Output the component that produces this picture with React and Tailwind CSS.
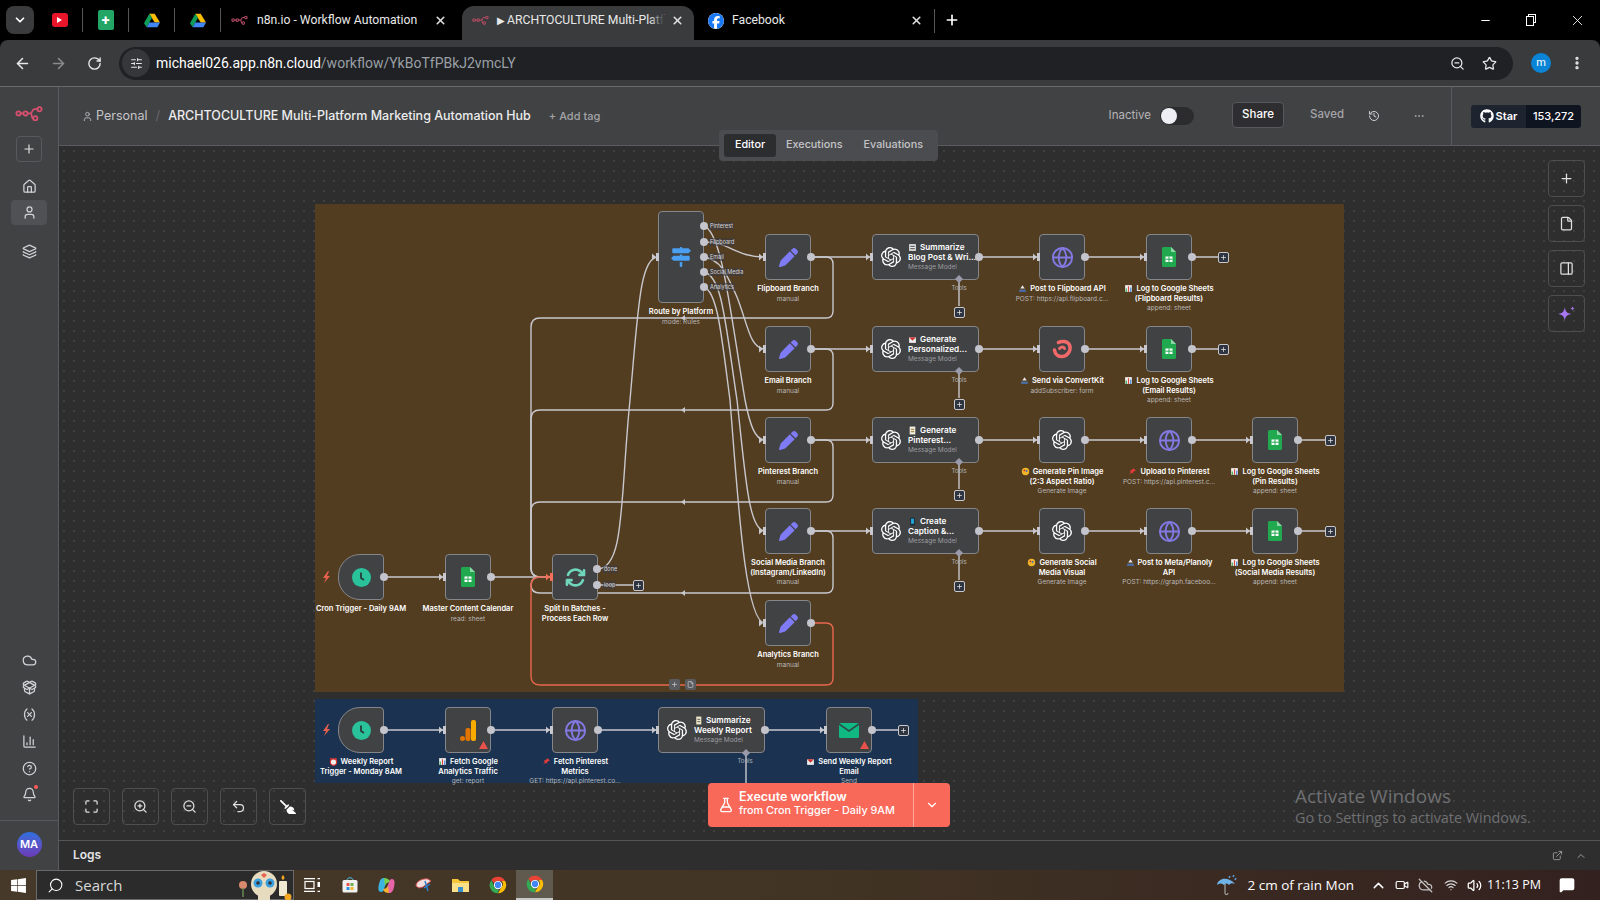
import React from "react";
import { ArrowLeft, ArrowRight, RotateCw, Star, ZoomIn, ZoomOut, Home, User, Layers, Cloud, PackageOpen, Variable, ChartColumn, CircleHelp, Bell, Plus, History, Ellipsis, Maximize, Undo2, File, PanelRight, FlaskConical, ChevronDown, ChevronUp, X, Minus, Globe, Search, SlidersHorizontal, Wifi, Volume2, CloudOff, Video, ExternalLink, MessageSquare } from "lucide-react";
import { FaPen, FaSignsPost, FaArrowsRotate, FaGithub, FaBroom, FaWindows, FaFacebook } from "react-icons/fa6";
import { SiOpenai } from "react-icons/si";

const ui = { fontFamily: '"Open Sans", "Liberation Sans", sans-serif' };
const rb = { fontFamily: 'Roboto, "Liberation Sans", sans-serif' };
const app = { fontFamily: 'Inter, "Liberation Sans", sans-serif' };

function N8nLogo({ size = 28, color = "#d9506f" }) {
  return (
    <svg width={size} height={size * 0.6} viewBox="0 0 40 24" fill="none" stroke={color} strokeWidth="2.6">
      <circle cx="5" cy="12" r="3" /><circle cx="15" cy="12" r="3" /><circle cx="35" cy="6" r="3" /><circle cx="29" cy="19" r="3" />
      <path d="M8 12h4M18 12h4c3 0 2-6 6-6h4M22 12c3 0 1 7 4 7" />
    </svg>
  );
}

function Drive() {
  return (
    <svg width="16" height="15" viewBox="0 0 24 22">
      <path d="M8 1h8l8 13h-8z" fill="#fbbc04" /><path d="M8 1 0 15l4 6 8-14z" fill="#0f9d58" /><path d="M4 21h16l4-7H8z" fill="#4285f4" />
    </svg>
  );
}

function Chrome({ size = 18 }) {
  return (
    <svg width={size} height={size} viewBox="0 0 24 24">
      <path d="M12 1a11 11 0 0 1 9.5 5.5H12a5.5 5.5 0 0 0-5 3L3.2 5.2A11 11 0 0 1 12 1z" fill="#ea4335" />
      <path d="M21.5 6.500A11 11 0 0 1 12 23l4.500-8a5.500 5.500 0 0 0 .2-8.500z" fill="#fbbc04" />
      <path d="M3.200 5.200 7.500 15a5.500 5.500 0 0 0 5.500 2.900L12 23A11 11 0 0 1 3.200 5.200z" fill="#34a853" />
      <circle cx="12" cy="12" r="5.500" fill="#fff" /><circle cx="12" cy="12" r="4.200" fill="#4285f4" />
    </svg>
  );
}

function Tab({ w, children, active }) {
  return (
    <div className={`relative self-end flex items-center h-[34px] pb-[5px] shrink-0 text-[12.200px] ${active ? "bg-[#3a3b3d] rounded-t-xl text-[#e8e8e8]" : "text-[#e8e8e8]"}`} style={{ width: w }}>
      {children}
    </div>
  );
}

function Pinned({ children }) {
  return <div className="w-[46px] h-[24px] shrink-0 flex items-center justify-center border-r border-[#555]">{children}</div>;
}

function TabBar() {
  return (
    <div className="h-10 bg-black shrink-0" style={rb}>
      <div className="flex items-center h-full w-full">
        <div className="ml-[6px] mr-[3px] w-[28px] h-[28px] rounded-lg bg-[#3a3b3d] flex items-center justify-center shrink-0"><ChevronDown size={14} className="text-white" strokeWidth={3} /></div>
        <Pinned><div className="w-[16px] h-[14px] bg-[#e8152b] rounded-[3px] flex items-center justify-center"><div className="w-0 h-0 border-y-[3px] border-y-transparent border-l-[5px] border-l-white" /></div></Pinned>
        <Pinned><div className="w-[16px] h-[20px] bg-[#23a566] rounded-[2px] flex items-center justify-center text-white font-bold text-[15px] leading-none">+</div></Pinned>
        <Pinned><Drive /></Pinned>
        <Pinned><Drive /></Pinned>
        <Tab w={241}>
          <span className="ml-[10px]"><N8nLogo size={17} color="#b04a62" /></span>
          <span className="ml-[9px] whitespace-nowrap">n8n.io - Workflow Automation</span>
          <X size={13} strokeWidth={3} className="absolute left-[213px] text-[#e0e0e0]" />
        </Tab>
        <Tab w={232} active>
          <span className="ml-[10px]"><N8nLogo size={17} color="#b04a62" /></span>
          <span className="ml-[8px] text-[10px]">▶</span>
          <span className="relative ml-[2px] whitespace-nowrap">ARCHTOCULTURE Multi-Platf<span className="absolute right-0 top-0 h-full w-[14px] bg-linear-to-r from-transparent to-[#3a3b3d]" /></span>
          <X size={13} strokeWidth={3} className="absolute left-[209px] text-[#e0e0e0]" />
        </Tab>
        <Tab w={241}>
          <FaFacebook size={16} className="ml-[14px] text-[#1a77f2] bg-white rounded-full" />
          <span className="ml-[8px]">Facebook</span>
          <X size={13} strokeWidth={3} className="absolute left-[216px] text-[#e0e0e0]" />
          <span className="absolute right-0 h-[24px] border-r border-[#555]" />
        </Tab>
        <Plus size={16} strokeWidth={2.5} className="ml-[9px] text-white" />
        <div className="ml-auto flex h-full items-center text-white">
          <div className="w-[46px] flex justify-center"><Minus size={13} /></div>
          <div className="w-[46px] flex justify-center">
            <div className="relative w-[11px] h-[12px]"><div className="absolute left-[2px] top-0 w-[8px] h-[9px] border border-white" /><div className="absolute left-0 top-[2px] w-[8px] h-[10px] border border-white bg-black" /></div>
          </div>
          <div className="w-[46px] flex justify-center"><X size={17} strokeWidth={1.2} /></div>
        </div>
      </div>
    </div>
  );
}

function Toolbar() {
  return (
    <div className="h-[47px] shrink-0 bg-[#3a3b3d] rounded-t-lg border-b border-[#6a6a6a] flex items-center text-[#e8e8e8]" style={rb}>
      <ArrowLeft size={17} strokeWidth={2.2} className="ml-[14px]" />
      <ArrowRight size={17} strokeWidth={2.2} className="ml-[19px] text-[#8a8a8a]" />
      <RotateCw size={15} strokeWidth={2.2} className="ml-[20px]" />
      <div className="ml-[17px] w-[1394px] h-[33px] bg-[#202124] rounded-full flex items-center shrink-0">
        <div className="ml-[3px] w-[28px] h-[28px] rounded-full bg-[#36373a] flex items-center justify-center"><SlidersHorizontal size={13} /></div>
        <span className="ml-[6px] text-[14px] text-white whitespace-nowrap">michael026.app.n8n.cloud<span className="text-[#9aa0a6]">/workflow/YkBoTfPBkJ2vmcLY</span></span>
        <ZoomOut size={15} className="ml-auto mr-[17px]" />
        <Star size={15} className="mr-[16px]" />
      </div>
      <div className="ml-[18px] w-[20px] h-[20px] rounded-full bg-[#0a84d6] text-white text-[11px] flex items-center justify-center">m</div>
      <Ellipsis size={16} strokeWidth={3} className="ml-[18px] rotate-90" />
    </div>
  );
}

function Sidebar() {
  const ic = "text-[#d2d2d6]";
  return (
    <div className="w-[59px] shrink-0 bg-[#414244] border-r border-[#5a5b5e] flex flex-col items-center">
      <div className="mt-[17px] h-[18px] flex items-center"><N8nLogo size={28} /></div>
      <div className="mt-[14px] w-[26px] h-[26px] rounded border border-[#58595c] flex items-center justify-center"><Plus size={14} className="text-[#e0e0e0]" /></div>
      <div className="mt-[12px] h-[24px] flex items-center"><Home size={15} className={ic} /></div>
      <div className="mt-[2px] w-[36px] h-[25px] rounded bg-[#505154] flex items-center justify-center"><User size={15} className={ic} /></div>
      <div className="mt-[14px] h-[24px] flex items-center"><Layers size={15} className={ic} /></div>
      <div className="mt-auto flex flex-col items-center">
        <div className="h-[27px] flex items-center"><Cloud size={15} className={ic} /></div>
        <div className="h-[27px] flex items-center"><PackageOpen size={15} className={ic} /></div>
        <div className="h-[27px] flex items-center"><Variable size={15} className={ic} /></div>
        <div className="h-[27px] flex items-center"><ChartColumn size={15} className={ic} /></div>
        <div className="h-[26px] flex items-center"><CircleHelp size={15} className={ic} /></div>
        <div className="relative h-[26px] flex items-center"><Bell size={15} className={ic} /><span className="absolute top-[4px] -right-[1px] w-[4px] h-[4px] rounded-full bg-[#ff5a5a]" /></div>
      </div>
      <div className="mt-[13px] w-full h-[50px] border-t border-[#58595c] flex items-center justify-center">
        <div className="w-[25px] h-[25px] -mt-[3px] rounded-full bg-linear-to-b from-[#2a6fdc] to-[#6a3ab8] text-white text-[11px] font-semibold flex items-center justify-center" style={app}>MA</div>
      </div>
    </div>
  );
}

function Header() {
  return (
    <div className="relative h-[59px] shrink-0 bg-[#414244] border-b border-[#5a5b5e] flex items-center" style={app}>
      <User size={11} className="ml-[23px] text-[#b8b8bc]" />
      <span className="ml-[3px] text-[12.500px] text-[#c4c4c8]">Personal</span>
      <span className="ml-[8px] text-[13px] text-[#66676a]">/</span>
      <span className="ml-[8px] text-[12.500px] font-medium text-[#ececec] whitespace-nowrap">ARCHTOCULTURE Multi-Platform Marketing Automation Hub</span>
      <span className="ml-[18px] text-[11px] font-medium text-[#a4a4a8] whitespace-nowrap">+ Add tag</span>
      <div className="ml-auto flex items-center">
        <span className="text-[11.500px] text-[#b4b4b8]">Inactive</span>
        <div className="ml-[9px] w-[34px] h-[18px] rounded-full bg-[#2c2c2e] relative"><div className="absolute left-[1px] top-[1px] w-[16px] h-[16px] rounded-full bg-[#eeeef4]" /></div>
        <div className="ml-[38px] w-[52px] h-[26px] -mt-[2px] rounded border border-[#58595c] bg-[#2e2e30] text-[11.500px] font-medium text-white flex items-center justify-center">Share</div>
        <span className="ml-[26px] w-[32px] -mt-[2px] text-[11.500px] font-medium text-[#a4a4a8]">Saved</span>
        <History size={12} className="ml-[26px] text-[#d0d0d4]" />
        <Ellipsis size={12} className="ml-[33px] text-[#a4a4a8]" />
      </div>
      <div className="ml-[26px] h-full border-l border-[#58595c]" />
      <div className="ml-[19px] mr-[19px] h-[23px] w-[110px] flex rounded-[3px] overflow-hidden text-white text-[11px] font-semibold">
        <div className="w-[55px] bg-[#1d2430] flex items-center justify-center gap-[2px]"><FaGithub size={14} />Star</div>
        <div className="w-[55px] bg-[#0f1520] flex items-center justify-center font-medium">153,272</div>
      </div>
      <div className="absolute left-[660px] top-[43px] w-[219px] h-[31px] z-20 rounded bg-[#4b4c4f] flex items-center text-[10.800px] font-medium text-[#c4c4c8]">
        <div className="ml-[5px] w-[52px] h-[23px] rounded-[3px] bg-[#2c2d2f] text-white flex items-center justify-center">Editor</div>
        <span className="ml-[10px]">Executions</span>
        <span className="ml-[21px]">Evaluations</span>
      </div>
    </div>
  );
}

function Emo({ k }) {
  const m = {
    news: <><rect x="1" y="1" width="6" height="6" fill="#e6e6e6" /><path d="M2 3h4M2 5h4" stroke="#666" /></>,
    out: <><path d="M1 5h6v2H1z" fill="#4a6fa8" /><path d="M4 1 6 4H2z" fill="#e6e6e6" /></>,
    chart: <><rect x="1" y="1" width="6" height="6" fill="#eee" /><path d="M2 7V4" stroke="#2fa84f" /><path d="M4 7V2" stroke="#d9453f" /><path d="M6 7V3" stroke="#3f7fd9" /></>,
    mail: <><rect x="1" y="2" width="6" height="5" fill="#eee" /><path d="M1 2l3 3 3-3" fill="#c33" /></>,
    doc: <><rect x="1.500" y="0.500" width="5" height="7" fill="#f2f0e0" /><path d="M2.500 3h3M2.500 5h3" stroke="#b08a50" /></>,
    phone: <><rect x="2" y="0.500" width="4" height="7" rx="0.700" fill="#1d2b3a" /><rect x="2.700" y="1.500" width="2.600" height="4.500" fill="#22a7d8" /></>,
    art: <><circle cx="4" cy="4" r="3.300" fill="#f0b429" /><circle cx="3" cy="3" r="0.800" fill="#c33" /><circle cx="5" cy="3.500" r="0.800" fill="#36c" /></>,
    pin: <><path d="M5 1l2 2-2 1-1 2-1-1-2 2 1.500-2.500-1-1 2-1z" fill="#e23b3b" /></>,
    alarm: <><circle cx="4" cy="4.500" r="2.800" fill="#f0f0f0" stroke="#d33" strokeWidth="1" /><path d="M1 2l1.500-1M7 2 5.500 1" stroke="#d33" /></>,
    memo: <><rect x="2" y="0.500" width="4.500" height="7" fill="#efe9c8" /><path d="M3 3h2.500M3 5h2.500" stroke="#777" /></>,
  };
  return <svg width="9" height="9" viewBox="0 0 8 8" className="inline-block shrink-0 mr-[3px]">{m[k]}</svg>;
}

const Sheet = () => (
  <svg width="14" height="20" viewBox="0 0 14 20">
    <path d="M0 1.500A1.500 1.500 0 0 1 1.500 0H9l5 5v13.500a1.500 1.500 0 0 1-1.500 1.500h-11A1.500 1.500 0 0 1 0 18.500z" fill="#20a94f" />
    <path d="M9 0l5 5H9z" fill="#8fd6a8" />
    <path d="M3.500 9.500h7v5.500h-7z" fill="#fff" /><path d="M3.500 12.200h7M7 9.500v5.500" stroke="#20a94f" />
  </svg>
);
const Pen = () => <FaPen size={19} color="#7f7bf5" />;
const Web = () => <Globe size={23} color="#8379e2" strokeWidth={2} />;
const AI = () => <SiOpenai size={20} color="#fff" />;
const Clock = () => (
  <svg width="19" height="19" viewBox="0 0 19 19"><circle cx="9.500" cy="9.500" r="9.500" fill="#29c29a" /><path d="M9 4.500v5.500l3 2" stroke="#2b3a3a" strokeWidth="1.800" fill="none" /></svg>
);
const Kit = () => (
  <svg width="20" height="20" viewBox="0 0 20 20" fill="none"><path d="M6.500 3.500c3-1.800 9-1.500 11 2.500 2 5-1.500 11-7 11.500-4 .3-7.500-2-8-6.500" stroke="#f2696a" strokeWidth="3.500" strokeLinecap="round" /><path d="M7.500 9.500c2-2 4.500-2 5 0" stroke="#f2696a" strokeWidth="3" strokeLinecap="round" /></svg>
);
const Bars = () => (
  <svg width="16" height="21" viewBox="0 0 16 21"><rect x="11" y="0" width="5" height="21" rx="2" fill="#f9ab00" /><rect x="5.500" y="8" width="5" height="13" rx="2" fill="#e37400" /><circle cx="2.500" cy="18.500" r="2.500" fill="#e37400" /></svg>
);
const Mail = () => (
  <svg width="20" height="15" viewBox="0 0 20 15"><rect width="20" height="15" rx="1.500" fill="#10b981" /><path d="M0 1l10 7 10-7" stroke="#2c4a4a" strokeWidth="1.600" fill="none" /></svg>
);

const L = (e, t) => ({ e, t });
const rows = [257, 349, 440, 531, 623];
const WY = 730;
const nodes = [
  { x: 338, c: 577, icon: <Clock />, trig: true, lab: [L(0, "Cron Trigger - Daily 9AM")] },
  { x: 445, c: 577, icon: <Sheet />, lab: [L(0, "Master Content Calendar")], sub: "read: sheet" },
  { x: 552, c: 577, icon: <FaArrowsRotate size={21} color="#6fd6bc" />, lab: [L(0, "Split In Batches -"), L(0, "Process Each Row")] },
  { x: 658, top: 211, h: 92, c: 257, icon: <FaSignsPost size={20} color="#4a9ff0" />, lab: [L(0, "Route by Platform")], sub: "mode: Rules" },
  { x: 765, c: 257, icon: <Pen />, lab: [L(0, "Flipboard Branch")], sub: "manual" },
  { x: 765, c: 349, icon: <Pen />, lab: [L(0, "Email Branch")], sub: "manual" },
  { x: 765, c: 440, icon: <Pen />, lab: [L(0, "Pinterest Branch")], sub: "manual" },
  { x: 765, c: 531, icon: <Pen />, lab: [L(0, "Social Media Branch"), L(0, "(Instagram/LinkedIn)")], sub: "manual" },
  { x: 765, c: 623, icon: <Pen />, lab: [L(0, "Analytics Branch")], sub: "manual" },
  { x: 1039, c: 257, icon: <Web />, lab: [L("out", "Post to Flipboard API")], sub: "POST: https://api.flipboard.c..." },
  { x: 1146, c: 257, icon: <Sheet />, plus: 1223, lab: [L("chart", "Log to Google Sheets"), L(0, "(Flipboard Results)")], sub: "append: sheet" },
  { x: 1039, c: 349, icon: <Kit />, lab: [L("out", "Send via ConvertKit")], sub: "addSubscriber: form" },
  { x: 1146, c: 349, icon: <Sheet />, plus: 1223, lab: [L("chart", "Log to Google Sheets"), L(0, "(Email Results)")], sub: "append: sheet" },
  { x: 1039, c: 440, icon: <AI />, lab: [L("art", "Generate Pin Image"), L(0, "(2:3 Aspect Ratio)")], sub: "Generate Image" },
  { x: 1146, c: 440, icon: <Web />, lab: [L("pin", "Upload to Pinterest")], sub: "POST: https://api.pinterest.c..." },
  { x: 1252, c: 440, icon: <Sheet />, plus: 1330, lab: [L("chart", "Log to Google Sheets"), L(0, "(Pin Results)")], sub: "append: sheet" },
  { x: 1039, c: 531, icon: <AI />, lab: [L("art", "Generate Social"), L(0, "Media Visual")], sub: "Generate Image" },
  { x: 1146, c: 531, icon: <Web />, lab: [L("out", "Post to Meta/Planoly"), L(0, "API")], sub: "POST: https://graph.faceboo..." },
  { x: 1252, c: 531, icon: <Sheet />, plus: 1330, lab: [L("chart", "Log to Google Sheets"), L(0, "(Social Media Results)")], sub: "append: sheet" },
  { x: 338, c: WY, icon: <Clock />, trig: true, lab: [L("alarm", "Weekly Report"), L(0, "Trigger - Monday 8AM")] },
  { x: 445, c: WY, icon: <Bars />, warn: true, lab: [L("chart", "Fetch Google"), L(0, "Analytics Traffic")], sub: "get: report" },
  { x: 552, c: WY, icon: <Web />, lab: [L("pin", "Fetch Pinterest"), L(0, "Metrics")], sub: "GET: https://api.pinterest.co..." },
  { x: 826, c: WY, icon: <Mail />, warn: true, plus: 903, lab: [L("mail", "Send Weekly Report"), L(0, "Email")], sub: "Send" },
];
const agents = [
  { x: 872, c: 257, e: "news", t: ["Summarize", "Blog Post & Wri..."], plus: true },
  { x: 872, c: 349, e: "mail", t: ["Generate", "Personalized..."], plus: true },
  { x: 872, c: 440, e: "doc", t: ["Generate", "Pinterest..."], plus: true },
  { x: 872, c: 531, e: "phone", t: ["Create", "Caption &..."], plus: true },
  { x: 658, c: WY, e: "memo", t: ["Summarize", "Weekly Report"] },
];

const pos = (x, y) => ({ left: x - 59, top: y - 146 });

function NodeBox({ n }) {
  const top = n.top ?? n.c - 23;
  const h = n.h ?? 46;
  return (
    <>
      <div className={`absolute w-[46px] border-[1.500px] border-[#85868a] bg-[#414244] flex items-center justify-center ${n.trig ? "rounded-l-[22px] rounded-r-[4px]" : "rounded-[4px]"}`} style={{ ...pos(n.x, top), height: h }}>
        {n.icon}
        {n.warn && (
          <svg width="9" height="8" viewBox="0 0 9 8" className="absolute right-[2px] bottom-[3px]"><path d="M4.500 0 9 8H0z" fill="#e8524a" /></svg>
        )}
      </div>
      <div className="absolute w-[180px] flex flex-col items-center" style={pos(n.x + 23 - 90, top + h + 4)}>
        {n.lab.map((l, i) => (
          <div key={i} className="flex items-center h-[9.500px] text-[7.500px] leading-[9.500px] font-semibold text-white whitespace-nowrap">
            {l.e ? <Emo k={l.e} /> : null}{l.t}
          </div>
        ))}
        {n.sub && <div className="mt-[1px] h-[9px] text-[6.500px] leading-[9px] text-[#b8b8b8] whitespace-nowrap">{n.sub}</div>}
      </div>
    </>
  );
}

function Agent({ a }) {
  return (
    <>
      <div className="absolute w-[107px] h-[46px] rounded-[4px] border-[1.500px] border-[#85868a] bg-[#414244] flex items-center" style={pos(a.x, a.c - 23)}>
        <div className="ml-[8px] w-[20px] flex justify-center shrink-0"><AI /></div>
        <div className="ml-[7px] min-w-0">
          <div className="flex items-center h-[10px] text-[8.200px] leading-[10px] font-semibold text-white whitespace-nowrap"><Emo k={a.e} />{a.t[0]}</div>
          <div className="h-[10px] text-[8.200px] leading-[10px] font-semibold text-white whitespace-nowrap">{a.t[1]}</div>
          <div className="mt-[1px] text-[6.500px] leading-[9px] text-[#9c9ca0] whitespace-nowrap">Message Model</div>
        </div>
      </div>
      <div className="absolute w-[30px] text-center text-[6px] leading-[8px] text-[#b4b4b8] bg-transparent" style={pos(a.x + 87 - 15, a.c + 27)}>Tools</div>
    </>
  );
}

function PlusBox({ x, y }) {
  return (
    <div className="absolute w-[11px] h-[11px] rounded-[2px] border-[1.500px] border-[#c8c8cc] bg-[#2e3440] flex items-center justify-center" style={pos(x - 5.500, y - 5.500)}>
      <Plus size={7} color="#e8e8e8" strokeWidth={2.5} />
    </div>
  );
}

const back = (c, b) => `M811 ${c}H826Q833 ${c} 833 ${c + 7}V${b - 7}Q833 ${b} 826 ${b}H540Q531 ${b} 531 ${b + 9}V568Q531 577 540 577H552`;
const line = "#c8c8ce";

function Edges() {
  const straight = [];
  rows.slice(0, 4).forEach((c) => straight.push(`M811 ${c}H872M979 ${c}H1039`));
  straight.push("M1085 257H1146M1192 257H1218M1085 349H1146M1192 349H1218");
  straight.push("M1085 440H1146M1192 440H1252M1298 440H1325M1085 531H1146M1192 531H1252M1298 531H1325");
  straight.push("M384 577H445M491 577H552M597 585H633");
  straight.push(`M384 ${WY}H445M491 ${WY}H552M597 ${WY}H658M765 ${WY}H826M871 ${WY}H898`);
  return (
    <svg className="absolute left-0 top-0" width="1541" height="694" viewBox="59 146 1541 694" fill="none" stroke={line} strokeWidth="1.400">
      {straight.map((d, i) => <path key={i} d={d} />)}
      <path d={back(257, 318)} />
      <path d={back(349, 410)} />
      <path d={back(440, 502)} />
      <path d="M811 531H826Q833 531 833 538V586Q833 593 826 593H540Q531 593 531 585Q531 577 540 577H552" />
      <path d="M704 226C722 232 730 310 745 400C750 425 755 440 765 440" />
      <path d="M704 242C730 242 735 257 765 257" />
      <path d="M704 257C720 260 725 270 737 297C748 325 750 349 765 349" />
      <path d="M704 272C722 276 725 320 737 400C745 470 748 531 765 531" />
      <path d="M704 287C718 292 722 340 730 400C738 500 745 623 765 623" />
      <path d="M597 569C625 569 620 500 630 400C638 310 640 257 658 257" />
      {[[959, 279, 306], [959, 371, 398], [959, 462, 489], [959, 553, 580], [746, WY + 23, 783]].map(([x, a, b], i) => <path key={i} d={`M${x} ${a}V${b}`} />)}
      <path d="M811 623H826Q833 623 833 630V678Q833 685 826 685H540Q531 685 531 676V586Q531 577 540 577H552" stroke="#e8674f" />
      {[318, 410, 502, 593].map((y) => <path key={y} d={`M681 ${y}l4-3v6z`} fill={line} stroke="none" />)}
      <path d="M668 685l4-3v6z" fill="#e8674f" stroke="none" />
    </svg>
  );
}

function Ports() {
  const inputs = [[445, 577], [552, 577], [658, 257], [1039, 440], [1146, 440], [1252, 440], [1039, 531], [1146, 531], [1252, 531], [445, WY], [552, WY], [658, WY], [826, WY]];
  rows.forEach((c) => inputs.push([765, c]));
  rows.slice(0, 4).forEach((c) => inputs.push([872, c]));
  [257, 349].forEach((c) => { inputs.push([1039, c]); inputs.push([1146, c]); });
  const outs = [];
  nodes.forEach((n) => { if (n.x !== 658 && n.x + 46 !== 598) outs.push([n.x + 46, n.c]); });
  outs.push([598, WY]);
  agents.forEach((a) => outs.push([a.x + 107, a.c]));
  const route = [226, 242, 257, 272, 287].map((y) => [704, y]);
  return (
    <svg className="absolute left-0 top-0 pointer-events-none" width="1541" height="694" viewBox="59 146 1541 694">
      {inputs.map(([x, y], i) => {
        const red = x === 552 && y === 577;
        return (
          <g key={i} fill={red ? "#f0705a" : "#c8c8ce"}>
            <path d={`M${x - 6} ${y - 3.500}l4 3.500-4 3.500z`} />
            <rect x={x - 2} y={y - 4} width="3" height="8" />
          </g>
        );
      })}
      {[...outs, ...route, [597, 569], [597, 585]].map(([x, y], i) => <circle key={i} cx={x} cy={y} r="4" fill="#c3c4cc" />)}
      {[[959, 279], [959, 371], [959, 462], [959, 553], [746, WY + 23]].map(([x, y], i) => <path key={i} d={`M${x} ${y - 4}l4 4-4 4-4-4z`} fill="#9a9aaa" />)}
      <path d="M328 571l-5 7h3l-2 5 6-7h-3l2-5z" fill="#e8604e" />
      <path d="M328 724l-5 7h3l-2 5 6-7h-3l2-5z" fill="#e8604e" />
    </svg>
  );
}

function Ctl({ children }) {
  return <div className="w-[37px] h-[37px] rounded border border-[#4d4e50] flex items-center justify-center text-[#e0e0e0] shrink-0">{children}</div>;
}

function Canvas() {
  const labels = ["Pinterest", "Flipboard", "Email", "Social Media", "Analytics"];
  return (
    <div className="relative flex-1 overflow-hidden bg-[#2e2e2e] bg-[radial-gradient(circle,#3f3f3f_0.8px,transparent_1px)] bg-[length:10px_10px]" style={app}>
      <div className="absolute w-[1029px] h-[488px] bg-[#533d20]" style={pos(315, 204)} />
      <div className="absolute w-[603px] h-[84px] bg-[#1b3350]" style={pos(315, 699)} />
      <Edges />
      {nodes.map((n, i) => <NodeBox key={i} n={n} />)}
      {agents.map((a, i) => <Agent key={i} a={a} />)}
      {labels.map((t, i) => (
        <div key={t} className="absolute h-[8px] px-[1px] text-[5.500px] leading-[8px] text-[#d8d8dc] bg-[#3a3a42]/60 whitespace-nowrap" style={pos(709, [226, 242, 257, 272, 287][i] - 4)}>{t}</div>
      ))}
      <div className="absolute text-[5.500px] leading-[8px] text-[#d8d8dc] bg-[#3a3a42]/60 px-[1px]" style={pos(603, 565)}>done</div>
      <div className="absolute text-[5.500px] leading-[8px] text-[#d8d8dc] bg-[#3a3a42]/60 px-[1px]" style={pos(603, 581)}>loop</div>
      <Ports />
      <PlusBox x={638} y={585} />
      {nodes.filter((n) => n.plus).map((n, i) => <PlusBox key={i} x={n.plus} y={n.c} />)}
      {agents.filter((a) => a.plus).map((a, i) => <PlusBox key={i} x={959} y={a.c + 55} />)}
      <div className="absolute w-[11px] h-[11px] bg-[#5a5b5e] rounded-[2px] flex items-center justify-center" style={pos(669, 679)}><Plus size={7} color="#ddd" /></div>
      <div className="absolute w-[11px] h-[11px] bg-[#5a5b5e] rounded-[2px] flex items-center justify-center" style={pos(685, 679)}><File size={7} color="#ddd" /></div>

      <div className="absolute left-[649px] top-[637px] w-[242px] h-[44px] rounded bg-[#f9695a] flex items-center text-white">
        <FlaskConical size={16} className="ml-[10px] shrink-0" />
        <div className="ml-[5px] w-[174px] mb-[4px]">
          <div className="text-[12.500px] font-semibold leading-[15px]">Execute workflow</div>
          <div className="text-[10.800px] font-medium leading-[14px] whitespace-nowrap">from Cron Trigger - Daily 9AM</div>
        </div>
        <div className="h-full border-l border-[#ffa99e] flex-1 flex items-center justify-center"><ChevronDown size={14} /></div>
      </div>

      <div className="absolute left-[14px] top-[642px] flex gap-[12px]">
        <Ctl><Maximize size={15} /></Ctl>
        <Ctl><ZoomIn size={15} /></Ctl>
        <Ctl><ZoomOut size={15} /></Ctl>
        <Ctl><Undo2 size={15} /></Ctl>
        <Ctl><FaBroom size={16} className="-scale-x-100 text-white" /></Ctl>
      </div>

      <div className="absolute left-[1489px] top-[14px] flex flex-col gap-[8px]">
        <Ctl><Plus size={15} /></Ctl>
        <Ctl><File size={15} /></Ctl>
        <Ctl><PanelRight size={15} /></Ctl>
        <Ctl>
          <svg width="20" height="20" viewBox="0 0 18 18" fill="#a877f2"><path d="M7 3c.6 4 2 5.400 6 6-4 .6-5.400 2-6 6-.6-4-2-5.400-6-6 4-.6 5.400-2 6-6z" /><path d="M14 2c.2 1.200.8 1.800 2 2-1.200.2-1.800.8-2 2-.2-1.200-.8-1.800-2-2 1.200-.2 1.800-.8 2-2z" /></svg>
        </Ctl>
      </div>

      <div className="absolute left-[1236px] top-[638px] text-[#6f7072]" style={ui}>
        <div className="text-[19px] leading-[24px]">Activate Windows</div>
        <div className="text-[14.400px] leading-[20px] whitespace-nowrap">Go to Settings to activate Windows.</div>
      </div>
    </div>
  );
}

function Logs() {
  return (
    <div className="h-[30px] shrink-0 bg-[#2e2e2e] border-t border-[#55565a] flex items-center" style={app}>
      <span className="ml-[14px] -mt-[2px] text-[12px] font-semibold text-[#e4e4e8]">Logs</span>
      <ExternalLink size={11} className="ml-auto text-[#9a9a9e]" />
      <ChevronUp size={12} className="ml-[12px] mr-[13px] text-[#9a9a9e]" />
    </div>
  );
}

function TaskIcon({ children, active }) {
  return <div className={`w-[37px] h-[30px] flex items-center justify-center ${active ? "bg-[#5f5a4d] border-b-2 border-[#c8c8c8]" : ""}`}>{children}</div>;
}

function Taskbar() {
  return (
    <div className="h-[30px] shrink-0 bg-linear-to-r from-[#46392a] via-[#423424] to-[#33211f] flex items-center text-white" style={ui}>
      <div className="w-[36px] flex justify-center"><FaWindows size={17} /></div>
      <div className="relative w-[258px] h-full bg-[#2b2b2b] border border-[#6a6a6a] flex items-center">
        <Search size={17} className="ml-[10px] -scale-x-100" strokeWidth={1.5} />
        <span className="ml-[11px] text-[15px] text-[#d8d8d8]">Search</span>
        <svg className="absolute right-0 top-0" width="56" height="30" viewBox="0 0 56 30">
          <circle cx="6" cy="14" r="4" fill="#d98a6c" /><path d="M6 17v9" stroke="#6a8a50" strokeWidth="1.500" />
          <ellipse cx="27" cy="13" rx="13" ry="13" fill="#e8dcc0" /><rect x="21" y="24" width="12" height="6" fill="#e8dcc0" />
          <circle cx="21" cy="12" r="4.500" fill="#3aa0e0" /><circle cx="33" cy="12" r="4.500" fill="#3aa0e0" /><circle cx="21" cy="12" r="1.800" fill="#333" /><circle cx="33" cy="12" r="1.800" fill="#333" />
          <path d="M24 4l3 3 3-3-3-2z" fill="#e8604e" />
          <rect x="42" y="10" width="8" height="15" rx="1" fill="#f0e8d0" /><path d="M46 4c2 2 2 4 0 5-2-1-2-3 0-5z" fill="#f5a623" /><circle cx="51" cy="26" r="3.500" fill="#f5a623" />
        </svg>
      </div>
      <div className="flex">
        <TaskIcon>
          <svg width="17" height="14" viewBox="0 0 17 14" fill="none" stroke="#fff" strokeWidth="1.200"><path d="M0 .6h11M0 13.400h11" /><rect x="1" y="3.500" width="9" height="7" /><rect x="13.500" y="4" width="2.500" height="5" fill="#fff" stroke="none" /><path d="M13.500 .6h2.500M13.500 13.400h2.500" /></svg>
        </TaskIcon>
        <TaskIcon>
          <svg width="16" height="16" viewBox="0 0 16 16"><path d="M5 3c0-3 6-3 6 0" stroke="#4fb8e0" fill="none" /><rect x="0.500" y="3" width="15" height="12.500" rx="1.500" fill="#f0f0f0" /><rect x="4.500" y="6" width="3" height="3" fill="#e8524a" /><rect x="8.500" y="6" width="3" height="3" fill="#6ab04c" /><rect x="4.500" y="10" width="3" height="3" fill="#2f8fe0" /><rect x="8.500" y="10" width="3" height="3" fill="#f5b82e" /></svg>
        </TaskIcon>
        <TaskIcon>
          <svg width="17" height="17" viewBox="0 0 17 17"><path d="M6 1c-3 0-4 2-5 6-1 4-1 8 2 8 3 0 3-3 4-6s1-8-1-8z" fill="#3bb5e0" /><path d="M11 16c3 0 4-2 5-6 1-4 1-8-2-8-3 0-3 3-4 6s-1 8 1 8z" fill="#e864a8" /><path d="M6 1c3 0 5 1 6 4-2 0-4 1-5 4z" fill="#7ad04a" /><path d="M11 16c-3 0-5-1-6-4 2 0 4-1 5-4z" fill="#f5b02e" /></svg>
        </TaskIcon>
        <TaskIcon>
          <svg width="17" height="15" viewBox="0 0 17 15"><path d="M1 8C1 3 8 0 13 1l3 2-8 6-4 1z" fill="#f0e0e0" stroke="#d05050" /><path d="M10 3l3 10M15 6l-6 4" stroke="#2f7fd0" strokeWidth="1.500" /></svg>
        </TaskIcon>
        <TaskIcon>
          <svg width="17" height="15" viewBox="0 0 17 15"><path d="M0 1h6l2 2h9v11H0z" fill="#f5c63a" /><rect x="0" y="5" width="17" height="9" fill="#fbe08a" /><rect x="6" y="9" width="5" height="5" fill="#3a8fd0" /></svg>
        </TaskIcon>
        <TaskIcon><Chrome /></TaskIcon>
        <TaskIcon active><Chrome /></TaskIcon>
      </div>
      <div className="ml-auto flex items-center">
        <svg width="24" height="24" viewBox="0 0 24 24" fill="none"><path d="M2 12C3 5 13 3 20 11c-3-1-4-1-6 1-2-2-3-2-5 0-2-2-4-2-7 0z" fill="#6fb4e8" /><path d="M10 11v9c0 2 3 2 3 0" stroke="#9a9a9a" strokeWidth="1.300" /><path d="M15 3l-1 2M19 2l-1 2M21 5l-1 2" stroke="#5aa0e0" strokeWidth="1.500" /></svg>
        <span className="ml-[8px] text-[13.500px] whitespace-nowrap">2 cm of rain Mon</span>
        <ChevronUp size={17} className="ml-[16px]" />
        <Video size={14} className="ml-[8px]" />
        <CloudOff size={15} className="ml-[9px] text-[#c4c4c4]" />
        <Wifi size={14} className="ml-[11px] text-[#d8d8d8]" />
        <Volume2 size={15} className="ml-[9px]" />
        <span className="ml-[5px] text-[12.500px] whitespace-nowrap">11:13 PM</span>
        <MessageSquare size={16} fill="#fff" className="ml-[18px] mr-[25px]" />
      </div>
    </div>
  );
}

export default function App() {
  return (
    <div className="w-[1600px] h-[900px] flex flex-col overflow-hidden bg-black">
      <TabBar />
      <Toolbar />
      <div className="flex-1 flex min-h-0">
        <Sidebar />
        <div className="flex-1 min-w-0 flex flex-col">
          <Header />
          <Canvas />
          <Logs />
        </div>
      </div>
      <Taskbar />
    </div>
  );
}
